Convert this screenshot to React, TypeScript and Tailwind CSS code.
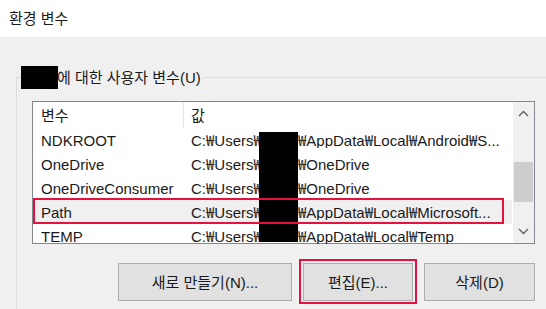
import React from "react";

const FONT = "font-['Liberation_Sans','Noto_Sans_CJK_KR',sans-serif]";

interface EnvRow {
  name: string;
  rest: string;
}

const ROWS: EnvRow[] = [
  { name: "NDKROOT", rest: "₩AppData₩Local₩Android₩S..." },
  { name: "OneDrive", rest: "₩OneDrive" },
  { name: "OneDriveConsumer", rest: "₩OneDrive" },
  { name: "Path", rest: "₩AppData₩Local₩Microsoft..." },
  { name: "TEMP", rest: "₩AppData₩Local₩Temp" },
];

// the won sign reads lighter in the CJK face, like the reference
function Won({ text }: { text: string }) {
  const parts = text.split("₩");
  return (
    <>
      {parts.map((p, i) => (
        <React.Fragment key={i}>
          {i > 0 && <span className="font-['Noto_Sans_CJK_KR',sans-serif]">₩</span>}
          {p}
        </React.Fragment>
      ))}
    </>
  );
}

function Chevron({ up }: { up?: boolean }) {
  return (
    <svg width="11" height="7" viewBox="0 0 11 7" className="block">
      <polyline
        points={up ? "1,6 5.5,1.5 10,6" : "1,1 5.5,5.5 10,1"}
        fill="none"
        stroke="#606060"
        strokeWidth="1.4"
      />
    </svg>
  );
}

function Row({ row }: { row: EnvRow }) {
  const selected = row.name === "Path";
  return (
    <div className={`flex h-[24px] items-center ${selected ? "bg-[#f0f0f0]" : ""}`}>
      <div className="w-[150px] shrink-0 pl-[8px]">{row.name}</div>
      <div className="flex min-w-0 flex-1 pl-[8px] whitespace-nowrap overflow-hidden">
        <span className="w-[68px] shrink-0">
          <Won text="C:₩Users₩" />
        </span>
        <span className="w-[39px] shrink-0" />
        <span>
          <Won text={row.rest} />
        </span>
      </div>
    </div>
  );
}

export default function App() {
  return (
    <div className={`flex h-[309px] w-[546px] flex-col overflow-hidden bg-[#f0f0f0] text-[15px] leading-none text-[#1a1a1a] ${FONT}`}>
      {/* Title bar */}
      <div className="flex h-[37px] shrink-0 items-center bg-white pl-[9px]">환경 변수</div>

      {/* Group box */}
      <div className="relative ml-[16px] mt-[40px] flex-1 border-l border-t border-[#dcdcdc]">
        <div className="absolute -top-[12px] left-[4px] flex items-center bg-[#f0f0f0] pr-[2px]">
          <span className="inline-block h-[23px] w-[37px] bg-black" />
          <span className="-ml-[1px]">에 대한 사용자 변수(U)</span>
        </div>

        {/* List */}
        <div className="relative ml-[15px] mt-[23px] flex h-[143px] w-[503px] border border-[#828790] bg-white">
          <div className="flex-1">
            <div className="flex h-[26px] items-center">
              <div className="w-[150px] shrink-0 pl-[8px]">변수</div>
              <div className="flex h-full items-center border-l border-[#e5e5e5] pl-[7px]">값</div>
            </div>
            {ROWS.map((r) => (
              <Row key={r.name} row={r} />
            ))}
          </div>

          {/* Scrollbar */}
          <div className="flex w-[22px] shrink-0 flex-col items-center border-l border-white bg-[#f0f0f0]">
            <div className="flex h-[23px] items-center justify-center">
              <Chevron up />
            </div>
            <div className="mt-[37px] h-[40px] w-[19px] bg-[#cdcdcd]" />
            <div className="flex-1" />
            <div className="flex h-[23px] items-center justify-center">
              <Chevron />
            </div>
          </div>

          {/* Redaction + highlight overlays */}
          <div className="absolute left-[226px] top-[30px] h-[110px] w-[39px] bg-black" />
          <div className="absolute left-0 top-[96px] h-[26px] w-[471px] border-2 border-[#e8103f]" />
        </div>

        {/* Buttons */}
        <div className="mt-[19px] flex justify-end gap-[11px] pr-[11px]">
          <button className="h-[38px] w-[174px] border border-[#adadad] bg-[#e1e1e1]">새로 만들기(N)...</button>
          <div className="relative">
            <button className="h-[38px] w-[110px] border border-[#adadad] bg-[#e1e1e1]">편집(E)...</button>
            <div className="absolute -left-[4px] -top-[4px] h-[45px] w-[118px] border-2 border-[#e8103f]" />
          </div>
          <button className="h-[38px] w-[111px] border border-[#adadad] bg-[#e1e1e1]">삭제(D)</button>
        </div>
      </div>
    </div>
  );
}
